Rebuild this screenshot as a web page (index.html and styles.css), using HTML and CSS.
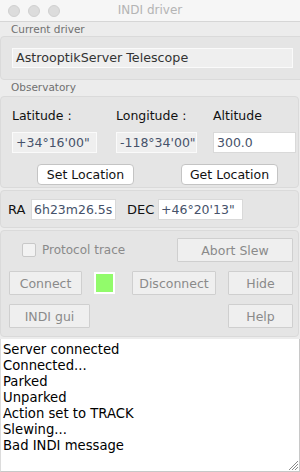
FILE: index.html
```html
<!DOCTYPE html>
<html lang="en">
<head>
    <meta charset="UTF-8">
    <meta name="viewport" content="width=device-width, initial-scale=1.0">
    <title>INDI driver</title>
    <link rel="stylesheet" href="styles.css">
</head>
<body>
    <div class="window">
        <div class="titlebar">
            <div class="lights">
                <span class="light"></span>
                <span class="light"></span>
                <span class="light"></span>
            </div>
            <div class="title">INDI driver</div>
        </div>

        <div class="caption">Current driver</div>
        <div class="group driver-box">
            <div class="field readonly wide">AstrooptikServer Telescope</div>
        </div>

        <div class="caption">Observatory</div>
        <div class="group obs-box">
            <div class="obs-grid">
                <div class="obs-label">Latitude :</div>
                <div class="obs-label">Longitude :</div>
                <div class="obs-label">Altitude</div>
                <div class="field readonly">+34°16'00"</div>
                <div class="field readonly">-118°34'00"</div>
                <div class="field">300.0</div>
            </div>
            <div class="loc-buttons">
                <button class="btn">Set Location</button>
                <button class="btn">Get Location</button>
            </div>
        </div>

        <div class="group coord-box">
            <span class="coord-label">RA</span>
            <div class="field coord-field">6h23m26.5s</div>
            <span class="coord-label dec">DEC</span>
            <div class="field coord-field">+46°20'13"</div>
        </div>

        <div class="group control-box">
            <div class="ctl-row first">
                <label class="trace"><span class="checkbox"></span>Protocol trace</label>
                <button class="btn flat abort">Abort Slew</button>
            </div>
            <div class="ctl-row">
                <button class="btn flat connect">Connect</button>
                <span class="status"><span class="status-fill"></span></span>
                <button class="btn flat disconnect">Disconnect</button>
                <button class="btn flat small">Hide</button>
            </div>
            <div class="ctl-row">
                <button class="btn flat gui">INDI gui</button>
                <button class="btn flat small">Help</button>
            </div>
        </div>

        <div class="log">
            <div>Server connected</div>
            <div>Connected...</div>
            <div>Parked</div>
            <div>Unparked</div>
            <div>Action set to TRACK</div>
            <div>Slewing...</div>
            <div>Bad INDI message</div>
            <svg class="grip" width="11" height="11" viewBox="0 0 11 11">
                <path d="M10 1 L1 10 M10 4 L4 10 M10 7 L7 10" stroke="#8a8a8a" stroke-width="1" fill="none"/>
            </svg>
        </div>
    </div>
</body>
</html>
```

FILE: styles.css
```css
body {
    margin: 0;
    font-family: "DejaVu Sans", "Liberation Sans", sans-serif;
    font-size: 12px;
    background: #ececec;
}
.window {
    width: 300px;
    height: 472px;
    overflow: hidden;
    background: #ececec;
}
.titlebar {
    position: relative;
    height: 21px;
    background: #f6f6f6;
    border-bottom: 1px solid #d6d6d6;
}
.lights {
    display: flex;
    gap: 8px;
    padding: 5px 0 0 8px;
}
.light {
    width: 10px;
    height: 10px;
    border-radius: 50%;
    background: #dcdcdc;
    border: 1px solid #d0d0d0;
}
.title {
    position: absolute;
    top: 3px;
    left: 0;
    right: 0;
    text-align: center;
    font-size: 12px;
    color: #b4b4b4;
}
.caption {
    height: 14px;
    line-height: 14px;
    padding-left: 11px;
    font-size: 10.5px;
    color: #707070;
}
.group {
    width: 297px;
    background: #e5e5e5;
    border: 1px solid #dadada;
    border-radius: 4px;
}
.field {
    box-sizing: border-box;
    height: 21px;
    line-height: 19px;
    padding: 0 3px;
    background: #fff;
    border: 1px solid #d9d9d9;
    color: #46526a;
    font-size: 12.5px;
    white-space: nowrap;
    overflow: hidden;
}
.field.readonly {
    background: #efefef;
    border-color: #fafafa;
}
.driver-box {
    height: 42px;
    padding: 0 5px 0 11px;
    box-sizing: content-box;
    display: flex;
    align-items: center;
}
.driver-box .wide {
    width: 281px;
    height: 20px;
    line-height: 18px;
    color: #333;
    font-size: 12.7px;
}
.obs-box {
    margin-top: 2px;
    height: 90px;
}
.obs-grid {
    display: grid;
    grid-template-columns: 85px 81px 80px;
    column-gap: 19px;
    row-gap: 9px;
    padding: 12px 0 0 11px;
}
.obs-grid > :nth-child(3),
.obs-grid > :nth-child(6) {
    margin-left: -3px;
}
.obs-label {
    height: 14px;
    line-height: 14px;
    font-size: 12.5px;
    color: #111;
}
.loc-buttons {
    display: flex;
    gap: 47px;
    padding: 11px 0 0 36px;
}
.btn {
    box-sizing: border-box;
    width: 97px;
    height: 21px;
    padding: 0;
    background: #fff;
    border: 1px solid #c4c4c4;
    border-radius: 4px;
    font-family: inherit;
    font-size: 12.5px;
    color: #111;
}
.coord-box {
    margin-top: 2px;
    height: 36px;
    display: flex;
    align-items: center;
}
.coord-label {
    font-size: 13px;
    color: #111;
    padding-left: 7px;
    width: 23px;
}
.coord-label.dec {
    padding-left: 11px;
    width: 31px;
}
.coord-field {
    width: 85px;
    padding: 0 2px;
}
.control-box {
    margin-top: 2px;
    height: 105px;
}
.ctl-row {
    display: flex;
    align-items: center;
    padding: 0 5px 0 8px;
    margin-top: 9px;
}
.ctl-row.first {
    margin-top: 7px;
}
.trace {
    display: flex;
    align-items: center;
    color: #8a8a8a;
    font-size: 12px;
    padding-left: 13px;
}
.checkbox {
    width: 12px;
    height: 12px;
    margin-right: 6px;
    background: #f2f2f2;
    border: 1px solid #c8c8c8;
    border-radius: 2px;
}
.btn.flat {
    height: 24px;
    background: #efefef;
    border: 1px solid #cfcfcf;
    border-radius: 1px;
    color: #8a8a8a;
}
.abort {
    width: 116px;
    margin-left: auto;
}
.connect {
    width: 73px;
}
.status {
    box-sizing: border-box;
    width: 23px;
    height: 24px;
    margin-left: 11px;
    padding: 2px;
    background: #fff;
    border: 1px solid #e4e4e4;
}
.status-fill {
    display: block;
    width: 100%;
    height: 100%;
    background: #92fb6b;
}
.disconnect {
    width: 84px;
    margin-left: 16px;
}
.btn.small {
    width: 65px;
    margin-left: auto;
}
.gui {
    width: 81px;
    height: 23px;
}
.log {
    position: relative;
    box-sizing: border-box;
    margin-top: 2px;
    height: 133px;
    padding: 3px 0 0 2px;
    background: #fff;
    border-right: 1px solid #c8c8c8;
    border-bottom: 1px solid #c8c8c8;
    border-left: 1px solid #dcdcdc;
    font-size: 13.2px;
    line-height: 16px;
    color: #000;
}
.grip {
    position: absolute;
    right: 0;
    bottom: 0;
}
```
